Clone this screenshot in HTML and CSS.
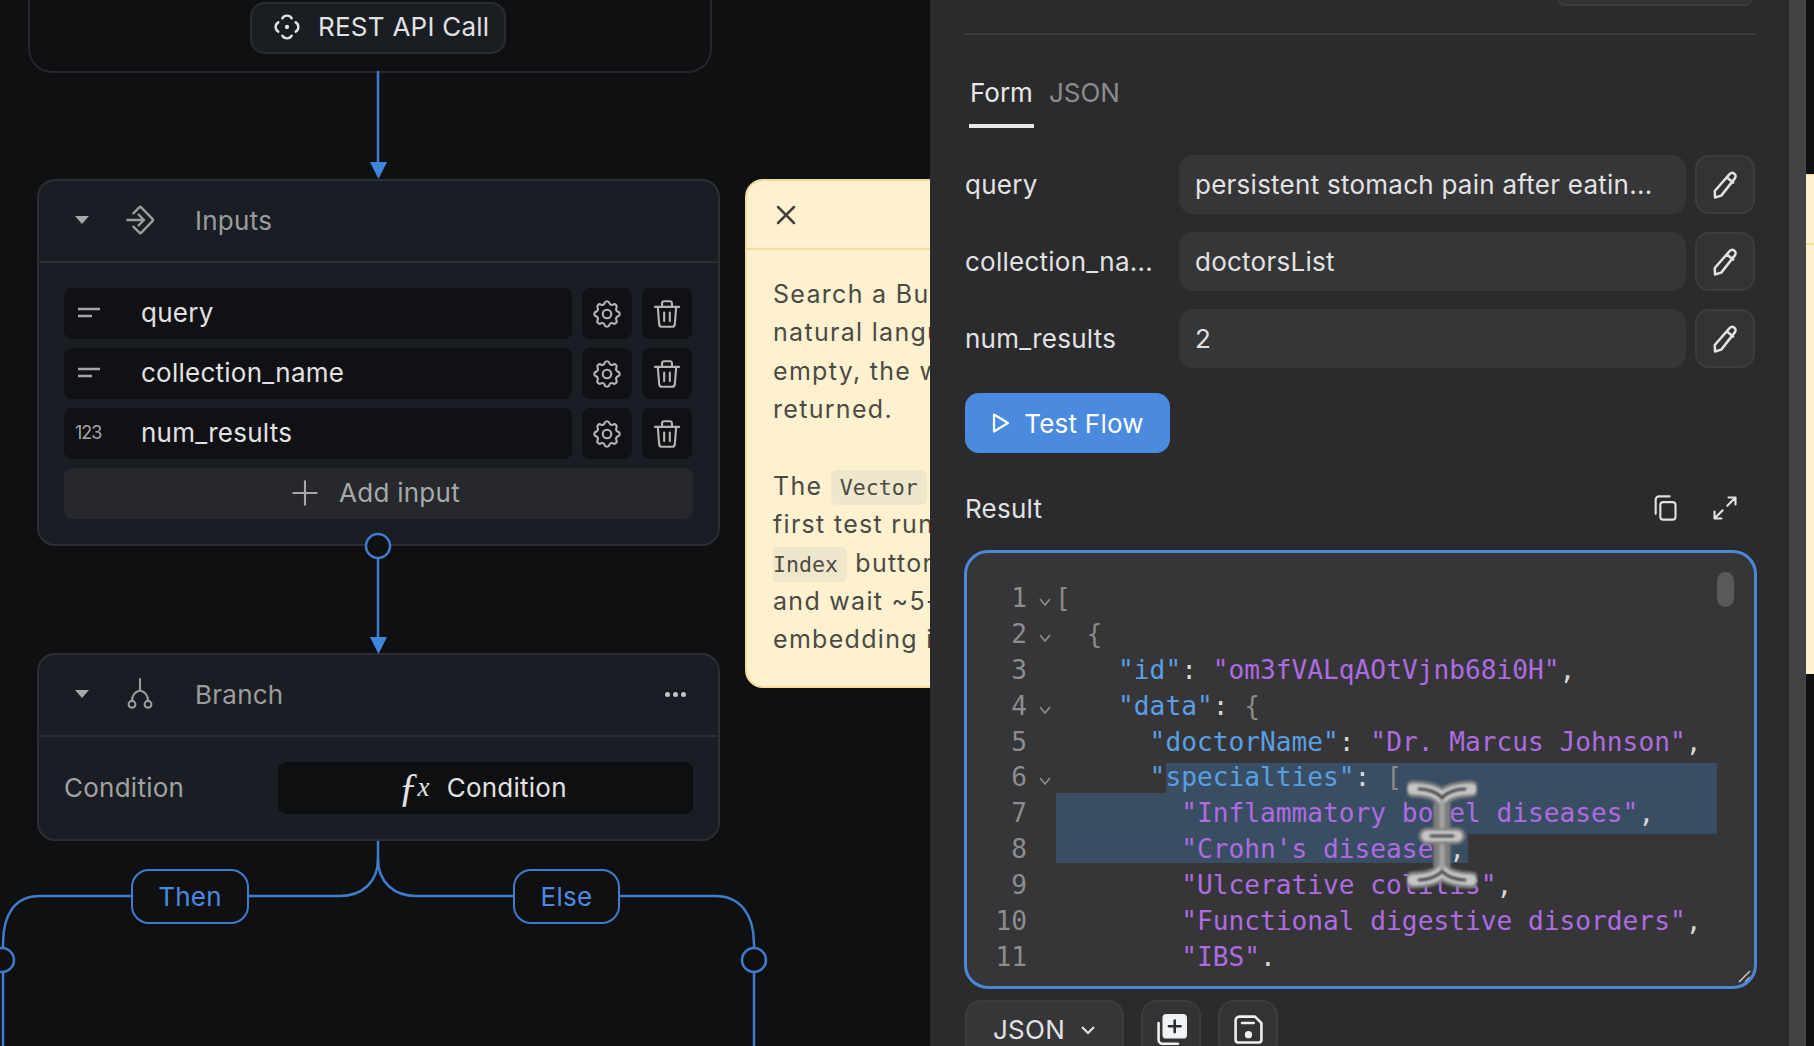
FILE: index.html
```html
<!DOCTYPE html>
<html>
<head>
    <title>Flow Editor</title>
    <link rel="stylesheet" href="styles.css">
</head>
<body>
    <div class="canvas">
        <svg class="edges" width="930" height="1046" viewBox="0 0 930 1046" fill="none">
            <path d="M378 71V165M378 558V640" />
            <polygon points="370,162 387,162 378.5,179" />
            <polygon points="370,637 387,637 378.5,654" />
            <path d="M378 841V859C378 883 361 896 340 896H40C15 896 3 914 3 944V1046" />
            <path d="M378 859C378 883 395 896 416 896H715C740 896 754 914 754 944V1046" />
            <circle cx="378" cy="546" r="12" />
            <circle cx="2" cy="960" r="12" />
            <circle cx="754" cy="960" r="12" />
        </svg>

        <div class="top-card">
            <div class="rest-pill">
                <svg class="icon" viewBox="0 0 24 24"><circle cx="12" cy="12" r="1.6" fill="currentColor" stroke="none"/><path d="M8.5 5.5C10 2.8 14 2.8 15.500 5.500M8.500 18.500C10 21.200 14 21.200 15.500 18.500M5.500 8.500C2.800 10 2.800 14 5.500 15.500M18.500 8.500C21.200 10 21.200 14 18.500 15.500"/></svg>
                <span>REST API Call</span>
            </div>
        </div>

        <div class="node inputs-node">
            <div class="node-head">
                <span class="caret"></span>
                <svg class="icon head-icon" viewBox="0 0 24 24"><path d="M2.500 12H15M11 8l4 4-4 4M7 7l4.500-4.500a1 1 0 0 1 1.400 0L21.500 11.300a1 1 0 0 1 0 1.400L13 21.500a1 1 0 0 1-1.400 0L7 17"/></svg>
                <span class="node-title">Inputs</span>
            </div>
            <div class="node-body">
                <div class="input-row">
                    <div class="input-name">
                        <svg class="type-icon" viewBox="0 0 24 12"><path d="M1 2H23M1 9H15"/></svg>
                        <span>query</span>
                    </div>
                    <button class="square-btn"><svg class="icon" viewBox="0 0 24 24"><path d="M10.325 4.317c.426-1.756 2.924-1.756 3.350 0a1.724 1.724 0 0 0 2.573 1.066c1.543-.94 3.310.826 2.370 2.370a1.724 1.724 0 0 0 1.065 2.572c1.756.426 1.756 2.924 0 3.350a1.724 1.724 0 0 0-1.066 2.573c.94 1.543-.826 3.310-2.370 2.370a1.724 1.724 0 0 0-2.572 1.065c-.426 1.756-2.924 1.756-3.350 0a1.724 1.724 0 0 0-2.573-1.066c-1.543.94-3.310-.826-2.370-2.370a1.724 1.724 0 0 0-1.065-2.572c-1.756-.426-1.756-2.924 0-3.350a1.724 1.724 0 0 0 1.066-2.573c-.94-1.543.826-3.310 2.370-2.370 1 .608 2.296.07 2.572-1.065z"/><circle cx="12" cy="12" r="3"/></svg></button>
                    <button class="square-btn"><svg class="icon" viewBox="0 0 24 24"><path d="M3.500 7H20.500M5.500 7l1 12.500a2 2 0 0 0 2 1.500h7a2 2 0 0 0 2-1.500l1-12.500M8.500 7V4.500a1.500 1.500 0 0 1 1.500-1.500h4a1.500 1.500 0 0 1 1.500 1.500V7M10 11v6M14 11v6"/></svg></button>
                </div>
                <div class="input-row">
                    <div class="input-name">
                        <svg class="type-icon" viewBox="0 0 24 12"><path d="M1 2H23M1 9H15"/></svg>
                        <span>collection_name</span>
                    </div>
                    <button class="square-btn"><svg class="icon" viewBox="0 0 24 24"><path d="M10.325 4.317c.426-1.756 2.924-1.756 3.350 0a1.724 1.724 0 0 0 2.573 1.066c1.543-.94 3.310.826 2.370 2.370a1.724 1.724 0 0 0 1.065 2.572c1.756.426 1.756 2.924 0 3.350a1.724 1.724 0 0 0-1.066 2.573c.94 1.543-.826 3.310-2.370 2.370a1.724 1.724 0 0 0-2.572 1.065c-.426 1.756-2.924 1.756-3.350 0a1.724 1.724 0 0 0-2.573-1.066c-1.543.94-3.310-.826-2.370-2.370a1.724 1.724 0 0 0-1.065-2.572c-1.756-.426-1.756-2.924 0-3.350a1.724 1.724 0 0 0 1.066-2.573c-.94-1.543.826-3.310 2.370-2.370 1 .608 2.296.07 2.572-1.065z"/><circle cx="12" cy="12" r="3"/></svg></button>
                    <button class="square-btn"><svg class="icon" viewBox="0 0 24 24"><path d="M3.500 7H20.500M5.500 7l1 12.500a2 2 0 0 0 2 1.500h7a2 2 0 0 0 2-1.500l1-12.500M8.500 7V4.500a1.500 1.500 0 0 1 1.500-1.500h4a1.500 1.500 0 0 1 1.500 1.500V7M10 11v6M14 11v6"/></svg></button>
                </div>
                <div class="input-row">
                    <div class="input-name">
                        <span class="type-num">123</span>
                        <span>num_results</span>
                    </div>
                    <button class="square-btn"><svg class="icon" viewBox="0 0 24 24"><path d="M10.325 4.317c.426-1.756 2.924-1.756 3.350 0a1.724 1.724 0 0 0 2.573 1.066c1.543-.94 3.310.826 2.370 2.370a1.724 1.724 0 0 0 1.065 2.572c1.756.426 1.756 2.924 0 3.350a1.724 1.724 0 0 0-1.066 2.573c.94 1.543-.826 3.310-2.370 2.370a1.724 1.724 0 0 0-2.572 1.065c-.426 1.756-2.924 1.756-3.350 0a1.724 1.724 0 0 0-2.573-1.066c-1.543.94-3.310-.826-2.370-2.370a1.724 1.724 0 0 0-1.065-2.572c-1.756-.426-1.756-2.924 0-3.350a1.724 1.724 0 0 0 1.066-2.573c-.94-1.543.826-3.310 2.370-2.370 1 .608 2.296.07 2.572-1.065z"/><circle cx="12" cy="12" r="3"/></svg></button>
                    <button class="square-btn"><svg class="icon" viewBox="0 0 24 24"><path d="M3.500 7H20.500M5.500 7l1 12.500a2 2 0 0 0 2 1.500h7a2 2 0 0 0 2-1.500l1-12.500M8.500 7V4.500a1.500 1.500 0 0 1 1.500-1.500h4a1.500 1.500 0 0 1 1.500 1.500V7M10 11v6M14 11v6"/></svg></button>
                </div>
                <button class="add-input">
                    <svg class="icon" viewBox="0 0 24 24"><path d="M12 2V22M2 12H22"/></svg>
                    <span>Add input</span>
                </button>
            </div>
        </div>

        <div class="node branch-node">
            <div class="node-head">
                <span class="caret"></span>
                <svg class="icon head-icon" viewBox="0 0 24 28"><path d="M12 1V11M5 20c0-5 3-8 7-9 4 1 7 4 7 9"/><circle cx="5" cy="23" r="3"/><circle cx="19" cy="23" r="3"/></svg>
                <span class="node-title">Branch</span>
                <span class="dots"><i></i><i></i><i></i></span>
            </div>
            <div class="branch-body">
                <span class="cond-label">Condition</span>
                <button class="cond-btn"><span class="fx"><span class="fx-f">ƒ</span>x</span><span>Condition</span></button>
            </div>
        </div>

        <div class="edge-label then-label">Then</div>
        <div class="edge-label else-label">Else</div>

        <div class="note">
            <div class="note-head">
                <svg class="note-close" viewBox="0 0 20 20"><path d="M2 2L18 18M18 2L2 18"/></svg>
            </div>
            <div class="note-body">
                <p>Search a Bu<br>natural langu<br>empty, the w<br>returned.</p>
                <p>The <code>Vector</code><br>first test run<br><code class="wrapped">Index</code> button<br>and wait ~5-<br>embedding i</p>
            </div>
        </div>
    </div>

    <div class="panel">
        <div class="top-stub-row"><div class="top-stub"></div></div>
        <hr class="panel-rule">

        <div class="tabs">
            <span class="tab active">Form</span>
            <span class="tab">JSON</span>
        </div>

        <div class="form-rows">
            <div class="form-row">
                <label class="form-label">query</label>
                <div class="form-value">persistent stomach pain after eatin...</div>
                <button class="edit-btn"><svg class="icon" viewBox="0 0 24 24"><path d="M15.500 3.500a2.700 2.700 0 0 1 4.500 3L9 20.500l-5 1.500-.2-5.200zM13.500 6l5 4"/></svg></button>
            </div>
            <div class="form-row">
                <label class="form-label">collection_na...</label>
                <div class="form-value">doctorsList</div>
                <button class="edit-btn"><svg class="icon" viewBox="0 0 24 24"><path d="M15.500 3.500a2.700 2.700 0 0 1 4.500 3L9 20.500l-5 1.500-.2-5.200zM13.500 6l5 4"/></svg></button>
            </div>
            <div class="form-row">
                <label class="form-label">num_results</label>
                <div class="form-value">2</div>
                <button class="edit-btn"><svg class="icon" viewBox="0 0 24 24"><path d="M15.500 3.500a2.700 2.700 0 0 1 4.500 3L9 20.500l-5 1.500-.2-5.200zM13.500 6l5 4"/></svg></button>
            </div>
        </div>

        <button class="test-flow">
            <svg class="play" viewBox="0 0 20 22"><path d="M3 2.500L17 11L3 19.500Z"/></svg>
            <span>Test Flow</span>
        </button>

        <div class="result-head">
            <span>Result</span>
            <div class="result-tools">
                <svg class="icon" viewBox="0 0 24 24"><rect x="8" y="7" width="13" height="15" rx="2.500"/><path d="M4 17V5a3 3 0 0 1 3-3h9"/></svg>
                <svg class="icon" viewBox="0 0 24 24"><path d="M14 10L21 3M15 3h6v6M10 14L3 21M3 15v6h6"/></svg>
            </div>
        </div>

        <div class="code-box">
            <div class="sel sel-a"></div>
            <div class="sel sel-b"></div>
            <div class="sel sel-c"></div>
            <div class="code-line"><span class="ln">1</span><span class="fold"><svg viewBox="0 0 12 8"><path d="M1 1L6 7L11 1"/></svg></span><span class="src"><b class="br">[</b></span></div>
            <div class="code-line"><span class="ln">2</span><span class="fold"><svg viewBox="0 0 12 8"><path d="M1 1L6 7L11 1"/></svg></span><span class="src">  <b class="br">{</b></span></div>
            <div class="code-line"><span class="ln">3</span><span class="fold"></span><span class="src">    <b class="key">"id"</b>: <b class="str">"om3fVALqAOtVjnb68i0H"</b>,</span></div>
            <div class="code-line"><span class="ln">4</span><span class="fold"><svg viewBox="0 0 12 8"><path d="M1 1L6 7L11 1"/></svg></span><span class="src">    <b class="key">"data"</b>: <b class="br">{</b></span></div>
            <div class="code-line"><span class="ln">5</span><span class="fold"></span><span class="src">      <b class="key">"doctorName"</b>: <b class="str">"Dr. Marcus Johnson"</b>,</span></div>
            <div class="code-line"><span class="ln">6</span><span class="fold"><svg viewBox="0 0 12 8"><path d="M1 1L6 7L11 1"/></svg></span><span class="src">      <b class="key">"specialties"</b>: <b class="br">[</b></span></div>
            <div class="code-line"><span class="ln">7</span><span class="fold"></span><span class="src">        <b class="str">"Inflammatory bowel diseases"</b>,</span></div>
            <div class="code-line"><span class="ln">8</span><span class="fold"></span><span class="src">        <b class="str">"Crohn's disease"</b>,</span></div>
            <div class="code-line"><span class="ln">9</span><span class="fold"></span><span class="src">        <b class="str">"Ulcerative colitis"</b>,</span></div>
            <div class="code-line"><span class="ln">10</span><span class="fold"></span><span class="src">        <b class="str">"Functional digestive disorders"</b>,</span></div>
            <div class="code-line"><span class="ln">11</span><span class="fold"></span><span class="src">        <b class="str">"IBS"</b>.</span></div>
            <div class="code-thumb"></div>
            <svg class="grip" viewBox="0 0 14 14"><path d="M2 13L13 2M8 13L13 8"/></svg>
            <svg class="ibeam" viewBox="0 0 70 110">
                <path class="ib-a" d="M6 9C20 9 30 12 35 18C40 12 52 9 64 9M35 18V92M6 100C20 100 30 97 35 91C40 97 52 100 64 100M20 56H50"/>
                <path class="ib-b" d="M6 9C20 9 30 12 35 18C40 12 52 9 64 9M6 100C20 100 30 97 35 91C40 97 52 100 64 100M20 56H50"/>
                <path class="ib-d" d="M12 9C20 9 30 12 35 18C40 12 50 9 58 9M12 100C20 100 30 97 35 91C40 97 50 100 58 100M24 56H46"/>
                <path class="ib-c" d="M35 22V46M35 66V88"/>
            </svg>
        </div>

        <div class="code-tools">
            <button class="lang-btn">
                <span>JSON</span>
                <svg class="chev" viewBox="0 0 16 10"><path d="M2 2L8 8L14 2"/></svg>
            </button>
            <button class="tool-btn">
                <svg class="icon" viewBox="0 0 24 24"><rect class="solid" x="6" y="1" width="17" height="17" rx="2"/><path class="plus" d="M14.500 5V14M10 9.500H19"/><path d="M2 7V20a3 3 0 0 0 3 3H17"/></svg>
            </button>
            <button class="tool-btn">
                <svg class="icon" viewBox="0 0 24 24"><path d="M5 2H17L22 7V20a2 2 0 0 1-2 2H4a2 2 0 0 1-2-2V5a3 3 0 0 1 3-3z"/><path d="M7 7H16"/><circle cx="12" cy="16" r="1.800" fill="currentColor"/></svg>
            </button>
        </div>
    </div>

    <div class="edge-strip"></div>
    <div class="next-note"><div class="next-note-fill"></div></div>
</body>
</html>
```

FILE: styles.css
```css
* {
    margin: 0;
    padding: 0;
    box-sizing: border-box;
    font-family: 'Inter', sans-serif;
}

html, body {
    height: 100%;
    overflow: hidden;
}

body {
    display: flex;
    background: #0f1012;
    color: #e2e2e2;
    font-size: 26px;
    letter-spacing: 0.25px;
}

button {
    border: none;
    color: inherit;
    font-size: inherit;
    letter-spacing: inherit;
    background: none;
}

.icon {
    width: 28px;
    height: 28px;
    fill: none;
    stroke: currentColor;
    stroke-width: 1.8;
    stroke-linecap: round;
    stroke-linejoin: round;
    flex: none;
}

/* canvas */
.canvas {
    position: relative;
    width: 930px;
    height: 100%;
    flex: none;
    overflow: hidden;
}

.edges {
    position: absolute;
    top: 0;
    left: 0;
    z-index: 1;
}

.edges path,
.edges circle {
    stroke: #3f7ccb;
    stroke-width: 2.5;
}

.edges circle {
    fill: #0f1012;
}

.edges polygon {
    fill: #3f86df;
}

.top-card {
    position: absolute;
    left: 28px;
    top: -40px;
    width: 684px;
    height: 113px;
    border: 2px solid #24262b;
    border-radius: 24px;
}

.rest-pill {
    position: absolute;
    left: 220px;
    top: 40px;
    width: 256px;
    height: 52px;
    display: flex;
    align-items: center;
    gap: 15px;
    padding: 0 0 3px 19px;
    background: #1a1d22;
    border: 2px solid #2a2c31;
    border-radius: 15px;
}

.rest-pill .icon {
    width: 32px;
    height: 32px;
}

.node {
    position: absolute;
    left: 37px;
    width: 683px;
    background: #1a1d23;
    border: 2px solid #2c2e32;
    border-radius: 18px;
}

.inputs-node {
    top: 179px;
    height: 367px;
}

.branch-node {
    top: 653px;
    height: 188px;
}

.node-head {
    display: flex;
    align-items: center;
    height: 82px;
    padding: 0 32px 2px 36px;
    border-bottom: 2px solid #2c2e32;
    color: #9c9c9c;
}

.caret {
    width: 0;
    height: 0;
    border-left: 7px solid transparent;
    border-right: 7px solid transparent;
    border-top: 8px solid #a8a8a8;
}

.head-icon {
    width: 32px;
    height: 32px;
    margin-left: 35px;
}

.node-title {
    margin-left: 39px;
}

.dots {
    margin-left: auto;
    display: flex;
    gap: 3px;
}

.dots i {
    width: 5px;
    height: 5px;
    border-radius: 50%;
    background: #c4c4c4;
}

.node-body {
    padding: 25px 25px;
    display: flex;
    flex-direction: column;
    gap: 9px;
}

.input-row {
    display: flex;
    gap: 10px;
    height: 51px;
}

.input-name {
    width: 508px;
    display: flex;
    align-items: center;
    padding-bottom: 2px;
    background: #101114;
    border-radius: 8px;
}

.type-icon {
    width: 24px;
    height: 12px;
    flex: none;
    margin: 0 40px 0 13px;
    fill: none;
    stroke: #a6a6a6;
    stroke-width: 2.500;
}

.type-num {
    width: 28px;
    flex: none;
    margin: 0 38px 0 11px;
    font-size: 18px;
    letter-spacing: -1px;
    color: #a6a6a6;
}

.square-btn {
    width: 50px;
    background: #101114;
    border-radius: 8px;
    color: #b4b4b4;
    display: flex;
    align-items: center;
    justify-content: center;
}

.square-btn .icon {
    width: 34px;
    height: 34px;
    stroke-width: 1.5;
}

.add-input {
    height: 51px;
    display: flex;
    align-items: center;
    justify-content: center;
    gap: 20px;
    padding: 0 6px 2px 0;
    background: #26282d;
    border-radius: 8px;
    color: #a8a8a8;
}

.branch-body {
    display: flex;
    align-items: center;
    justify-content: space-between;
    padding: 25px 25px 0;
}

.cond-label {
    padding-bottom: 2px;
    color: #a2a2a2;
}

.cond-btn {
    width: 415px;
    height: 52px;
    display: flex;
    align-items: center;
    justify-content: center;
    gap: 17px;
    padding: 0 6px 2px 0;
    background: #0e0f11;
    border-radius: 8px;
}

.fx {
    display: flex;
    align-items: center;
    font-family: 'Liberation Serif', serif;
    font-style: italic;
    font-size: 27px;
}

.fx-f {
    font-family: 'Liberation Serif', serif;
    font-size: 40px;
    line-height: 1;
    margin-right: -1px;
}

.edge-label {
    position: absolute;
    z-index: 2;
    top: 869px;
    height: 55px;
    display: flex;
    align-items: center;
    justify-content: center;
    background: #0f1012;
    border: 2.500px solid #3f7ccb;
    border-radius: 18px;
    color: #4a8be0;
}

.then-label {
    left: 131px;
    width: 118px;
}

.else-label {
    left: 513px;
    width: 107px;
}

/* sticky note */
.note {
    position: absolute;
    left: 745px;
    top: 179px;
    width: 500px;
    height: 509px;
    background: #fdf1cf;
    border: 2px solid #f5dc9c;
    border-radius: 18px;
    color: #4c4a45;
}

.note-head {
    height: 69px;
    display: flex;
    align-items: center;
    padding-left: 29px;
    border-bottom: 2px solid #f6dc98;
}

.note-close {
    width: 20px;
    height: 20px;
    fill: none;
    stroke: #44423e;
    stroke-width: 2.500;
    stroke-linecap: round;
}

.note-body {
    padding: 25px 26px;
    font-size: 25px;
    line-height: 38.300px;
    letter-spacing: 1.300px;
    white-space: nowrap;
}

.note-body p + p {
    margin-top: 38.800px;
}

.note-body code {
    padding: 5px 9px;
    font-family: 'DejaVu Sans Mono', monospace;
    font-size: 21.600px;
    line-height: 1;
    letter-spacing: 0;
    background: #efe7cb;
    border-radius: 6px;
}

.note-body code.wrapped {
    padding-left: 0;
    border-radius: 0 6px 6px 0;
}

/* right panel */
.panel {
    width: 859px;
    height: 100%;
    flex: none;
    padding: 0 33px 0 35px;
    background: #2b2b2d;
    position: relative;
    overflow: hidden;
}

.top-stub-row {
    display: flex;
    justify-content: flex-end;
    padding-right: 4px;
}

.top-stub {
    width: 194px;
    height: 6px;
    background: #333335;
    border: 2px solid #3b3b3d;
    border-top: none;
    border-radius: 0 0 12px 12px;
}

.panel-rule {
    margin-top: 27px;
    border: none;
    border-top: 2px solid #3b3b3d;
}

.tabs {
    display: flex;
    gap: 14px;
    margin: 41px 0 0 4px;
}

.tab {
    height: 52px;
    padding: 0 1px;
    line-height: 34px;
    letter-spacing: 0;
    color: #8c8c8e;
}

.tab.active {
    color: #e8e8e8;
    border-bottom: 4px solid #e8e8e8;
}

.form-rows {
    display: flex;
    flex-direction: column;
    gap: 18px;
    margin-top: 27px;
}

.form-row {
    display: flex;
    align-items: center;
    height: 59px;
}

.form-label {
    width: 214px;
    flex: none;
}

.form-value {
    width: 507px;
    height: 59px;
    flex: none;
    display: flex;
    align-items: center;
    padding-left: 16px;
    background: #363638;
    border-radius: 14px;
}

.edit-btn {
    width: 60px;
    height: 59px;
    margin-left: 9px;
    flex: none;
    display: flex;
    align-items: center;
    justify-content: center;
    background: #333335;
    border: 2px solid #3d3d3f;
    border-radius: 14px;
}

.edit-btn .icon {
    width: 30px;
    height: 30px;
    stroke-width: 2;
}

.test-flow {
    width: 205px;
    height: 60px;
    margin-top: 25px;
    display: flex;
    align-items: center;
    justify-content: center;
    gap: 13px;
    background: #4a8be0;
    border-radius: 14px;
    color: #fff;
}

.play {
    width: 20px;
    height: 22px;
    fill: none;
    stroke: #fff;
    stroke-width: 2.200;
    stroke-linejoin: round;
}

.result-head {
    display: flex;
    align-items: center;
    justify-content: space-between;
    height: 40px;
    margin-top: 35px;
}

.result-tools {
    display: flex;
    gap: 32px;
    padding-right: 17px;
}

.code-box {
    position: relative;
    height: 439px;
    margin: 22px -1px 0;
    padding-top: 28px;
    background: #363638;
    border: 3px solid #4a88d8;
    border-radius: 24px;
    overflow: hidden;
    font-size: 26.200px;
    letter-spacing: 0;
}

.code-line {
    position: relative;
    display: flex;
    height: 35.900px;
    line-height: 35.900px;
}

.code-line span,
.code-line b {
    font-family: 'DejaVu Sans Mono', monospace;
    font-weight: 400;
}

.ln {
    width: 60px;
    flex: none;
    text-align: right;
    color: #8d8d8f;
}

.fold {
    width: 28px;
    flex: none;
    padding: 17px 0 0 12px;
}

.fold svg {
    display: block;
    width: 12px;
    height: 8px;
    fill: none;
    stroke: #8d8d8f;
    stroke-width: 1.600;
}

.src {
    white-space: pre;
    color: #d8d8d8;
}

.br {
    color: #8a8a86;
}

.key {
    color: #5a9fe2;
}

.str {
    color: #ad6ce0;
}

.sel {
    position: absolute;
    background: #3a4e63;
}

.sel-a {
    left: 199px;
    top: 210px;
    width: 551px;
    height: 30px;
}

.sel-b {
    left: 89px;
    top: 240px;
    width: 661px;
    height: 41px;
}

.sel-c {
    left: 89px;
    top: 281px;
    width: 412px;
    height: 29px;
}

.code-thumb {
    position: absolute;
    left: 750px;
    top: 19px;
    width: 17px;
    height: 35px;
    background: #59595b;
    border-radius: 9px;
}

.grip {
    position: absolute;
    right: 3px;
    bottom: 3px;
    width: 14px;
    height: 14px;
    fill: none;
    stroke: #c8c8c8;
    stroke-width: 1.500;
}

.ibeam {
    position: absolute;
    left: 440px;
    top: 227px;
    width: 70px;
    height: 110px;
    fill: none;
    stroke-linecap: round;
    filter: blur(0.8px);
}

.ib-a {
    stroke: #7d7d7d;
    stroke-width: 17;
}

.ib-b {
    stroke: #c6c6c6;
    stroke-width: 11;
}

.ib-d {
    stroke: #4a4a4a;
    stroke-width: 3;
}

.ib-c {
    stroke: #a4a4a4;
    stroke-width: 5;
}

.code-tools {
    display: flex;
    gap: 17px;
    margin-top: 11px;
}

.lang-btn {
    width: 159px;
    height: 59px;
    display: flex;
    align-items: center;
    justify-content: center;
    gap: 15px;
    background: #363638;
    border: 2px solid #3d3d3f;
    border-radius: 16px;
}

.chev {
    width: 16px;
    height: 10px;
    fill: none;
    stroke: #e2e2e2;
    stroke-width: 2.200;
}

.tool-btn {
    width: 60px;
    height: 59px;
    display: flex;
    align-items: center;
    justify-content: center;
    background: #333335;
    border: 2px solid #3d3d3f;
    border-radius: 16px;
    color: #f0f0f0;
}

.tool-btn .icon {
    width: 31px;
    height: 31px;
    stroke-width: 2;
}

.tool-btn .solid {
    fill: #f0f4f8;
}

.tool-btn .plus {
    stroke: #2b2b2d;
}

.edge-strip {
    width: 17px;
    height: 100%;
    flex: none;
    background: #434345;
}

.next-note {
    flex: 1;
    padding-top: 174px;
}

.next-note-fill {
    height: 500px;
    background: #fdf1cf;
    border-top: 1px solid #f5dc9c;
    background-image: linear-gradient(#f5dc9c, #f5dc9c);
    background-size: 100% 2px;
    background-position: 0 68px;
    background-repeat: no-repeat;
}
```
